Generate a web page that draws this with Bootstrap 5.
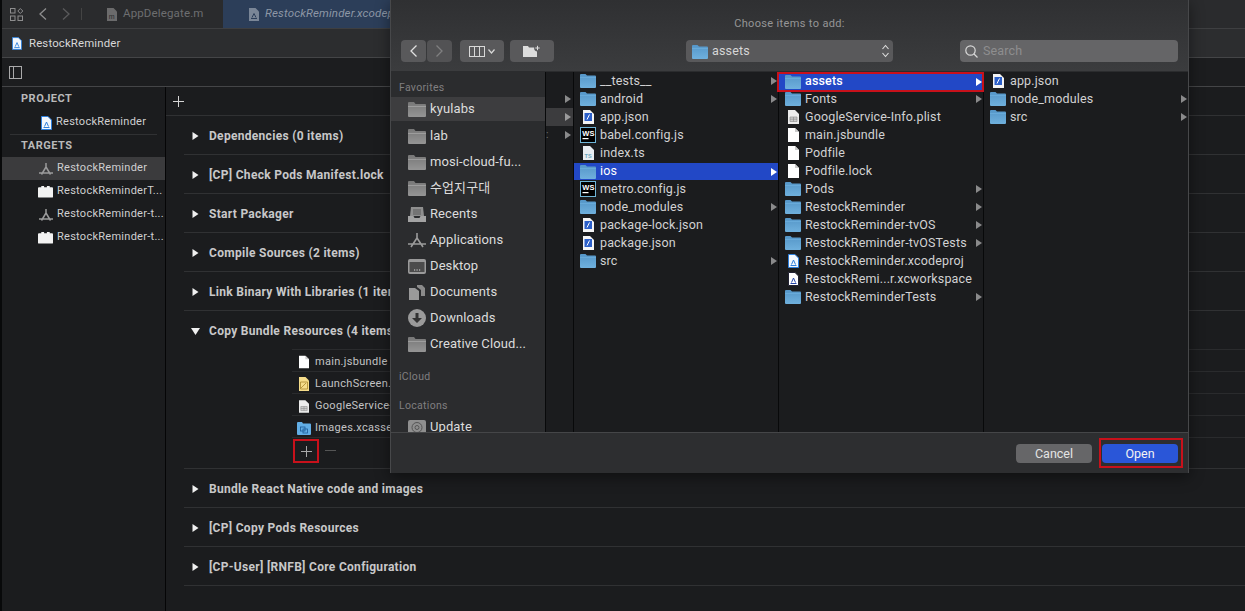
<!DOCTYPE html>
<html lang="en">
<head>
<meta charset="UTF-8">
<title>Xcode - Choose items to add</title>
<link href="https://cdn.jsdelivr.net/npm/bootstrap@5.3.3/dist/css/bootstrap.min.css" rel="stylesheet">
<style>
html, body { margin: 0; height: 100%; background: #1b1c1e; overflow: hidden; }
body { font-family: Roboto, "Noto Sans CJK KR", sans-serif; font-size: 12px; color: #d4d4d4; letter-spacing: .15px; }
svg { display: block; flex: none; }

/* xcode window behind the sheet */
.xc-app { position: relative; width: 1245px; height: 611px; border-left: 2px solid #08090a; overflow: hidden; }
.tab-bar { height: 29px; background: #2a2b2d; border-bottom: 1px solid #3e3f41; }
.tab-grid { margin: 0 16px 0 8px; }
.tab-fwd { margin-left: 15px; }
.tab-sep { width: 1px; height: 12px; background: #444; margin-left: 11px; }
.xc-tab { height: 28px; color: #6d6e70; font-size: 11.5px; }
.xc-tab svg { margin-right: 6px; }
.tab-one { width: 141px; padding-left: 25px; }
.tab-two { width: 170px; padding-left: 26px; background: #2c3e59; color: #8d97a6; font-style: italic; white-space: nowrap; overflow: hidden; }
.crumb-bar { height: 29px; background: #2c2d2f; border-bottom: 1px solid #444547; padding: 1px 0 0 10px; color: #d8d8d8; font-size: 11.4px; }
.crumb-bar svg { margin-right: 7px; }
.pane-bar { height: 29px; background: #1c1d1f; border-bottom: 1px solid #444547; padding-left: 7px; }
.xc-body { height: 524px; }
.xc-side { width: 164px; flex: none; border-right: 1px solid #050506; padding-top: 1px; }
.side-head { height: 22px; line-height: 22px; padding-left: 19px; font-weight: 700; font-size: 11px; color: #b9b9ba; letter-spacing: .5px; }
.side-row { height: 23px; padding-left: 36px; font-size: 11px; color: #cfcfd0; white-space: nowrap; overflow: hidden; letter-spacing: .27px; }
.side-row.is-on { background: #3b3b3d; }
.side-row svg { margin-right: 4px; }
.side-proj { padding: 2px 0 0 39px; }
.side-target { padding-left: 37px; }
.side-rule { height: 1px; background: #303133; margin: 1px 8px 0 8px; }
.xc-main { flex: 1; min-width: 0; }
.add-row { height: 29px; padding-left: 7px; border-bottom: 1px solid #303133; }
.phase { height: 39px; padding-top: 1px; margin-left: 18px; border-bottom: 1px solid #303133; font-weight: 700; font-size: 12px; color: #c8c8c9; white-space: nowrap; letter-spacing: .3px; }
.phase svg { margin: 0 10px 0 8px; }
.phase-open { height: 20px; padding-top: 0; border: 0; margin-top: 10px; }
.phase-open svg { margin: 0 9px 0 7px; }
.res-table { margin-left: 126px; margin-top: 8px; border-bottom: 1px solid #2a2b2d; }
.res-row { height: 22px; padding: 3px 0 0 3px; border-top: 1px solid #2a2b2d; font-size: 11px; color: #c4c4c5; white-space: nowrap; letter-spacing: .3px; }
.res-icon { width: 18px; display: flex; justify-content: center; margin-right: 2px; }
.res-tools { height: 31px; margin-left: 18px; border-bottom: 1px solid #303133; padding: 1px 0 0 109px; }
.red-box { border: 2px solid #c8111b; }
.plus-box { width: 26px; height: 24px; }
.minus-mark { width: 11px; height: 1px; background: #555; margin: 11px 0 0 6px; }

/* open panel sheet */
.sheet { position: absolute; left: 388px; top: 0; width: 799px; height: 473px; background: #2a2b2d; border: 1px solid #47484a; border-top: 0; box-shadow: 0 4px 14px rgba(0,0,0,.45); }
.sheet-top { height: 72px; background: linear-gradient(#2f3032, #3b3c3e); border-bottom: 1px solid #2b2c2e; }
.sheet-title { text-align: center; padding-top: 16px; height: 40px; color: #969697; font-size: 11px; letter-spacing: .35px; }
.sheet-tools { padding-left: 10px; height: 22px; }
.tool-btn { height: 22px; background: #59595b; border-radius: 4px; display: flex; align-items: center; justify-content: center; }
.back-btn { width: 25px; }
.fwd-btn { width: 25px; margin-left: 1px; background: #525254; }
.view-btn { width: 44px; margin-left: 8px; gap: 3px; }
.new-btn { width: 44px; margin-left: 6px; }
.path-btn { width: 207px; margin-left: 132px; justify-content: flex-start; padding: 1px 0 0 6px; color: #d6d6d6; font-size: 12.5px; position: relative; }
.path-btn svg:first-child { margin-right: 4px; }
.path-arrows { position: absolute; right: 4px; top: 4px; }
.search-box { width: 218px; margin-left: 67px; justify-content: flex-start; padding: 1px 0 0 5px; color: #8e8e8f; font-size: 12.5px; background: #656567; }
.search-box svg { margin-right: 5px; }
.sheet-mid { height: 360px; }
.fav-col { width: 155px; flex: none; background: #2b2c2e; border-right: 1px solid #08090a; padding: 8px 0 0 8px; overflow: hidden; }
.fav-title { height: 16px; line-height: 16px; color: #807f80; font-size: 10.5px; letter-spacing: .3px; }
.fav-row { height: 26px; margin-left: -8px; padding-left: 17px; color: #dcdcdc; font-size: 13px; letter-spacing: .1px; white-space: nowrap; }
.fav-row.is-on { background: #3d3d3f; height: 24px; margin-top: 1px; margin-bottom: 2px; }
.fav-row svg { margin-right: 4px; }
.fav-gap { margin-top: 12px; }
.fav-gap2 { margin-top: 13px; }
.file-col { background: #1b1c1e; border-right: 1px solid #08090a; flex: none; width: 205px; overflow: hidden; }
.col-stub { width: 28px; position: relative; }
.col-last { width: auto; flex: 1; border-right: 0; }
.file-row { height: 18px; padding: 0 1px 0 6px; color: #d2d2d3; font-size: 12.5px; white-space: nowrap; }
.file-row.is-on { background: #2248c6; color: #fff; height: 17px; margin-top: 1px; }
.file-name { margin-left: 4px; flex: 1; min-width: 0; }
.file-icon { width: 16px; display: flex; justify-content: center; }
.stub-row { height: 18px; justify-content: flex-end; padding-right: 2px; }
.stub-row.is-on { background: #3c3c3e; }
.stub-dots { position: absolute; left: 0; top: 58px; color: #777; font-size: 10px; line-height: 10px; }
.sheet-foot { height: 41px; background: #2d2e30; border-top: 1px solid #454648; }
.sheet-btn { height: 19px; padding: 0; font-size: 12.5px; line-height: 19px; border: 0; border-radius: 4px; color: #e4e4e4; }
.cancel-btn { width: 76px; background: #666668; }
.open-btn { width: 76px; background: #2a56d8; color: #f3f3f3; }
/* red callouts lie over the panel */
.mark-row { position: absolute; left: 386px; top: 72px; width: 207px; height: 20px; pointer-events: none; }
.mark-open { width: 84px; height: 30px; margin: 0 5px 0 7px; padding-right: 2px; display: flex; align-items: center; justify-content: center; }
</style>
</head>
<body>
<svg width="0" height="0" class="position-absolute">
<defs>
<linearGradient id="blueFill" x1="0" y1="0" x2="0" y2="1"><stop offset="0" stop-color="#5596c8"/><stop offset="1" stop-color="#6fb0dd"/></linearGradient>
<linearGradient id="grayFill" x1="0" y1="0" x2="0" y2="1"><stop offset="0" stop-color="#777"/><stop offset="1" stop-color="#959595"/></linearGradient>
<symbol id="i-folder" viewBox="0 0 16 14"><path d="M0 1q0-1 1-1h4.500l1.500 1.600H15q1 0 1 1V13q0 1-1 1H1q-1 0-1-1z" fill="url(#blueFill)"/><path d="M0 3h16v.7H0z" fill="#7cbce8" opacity=".6"/></symbol>
<symbol id="i-gfolder" viewBox="0 0 18 15"><path d="M0 1q0-1 1-1h5l1.500 2H17q1 0 1 1v11q0 1-1 1H1q-1 0-1-1z" fill="url(#grayFill)"/><path d="M0 4h18v.7H0z" fill="#aaa"/></symbol>
<symbol id="i-doc" viewBox="0 0 11 14"><path d="M0 0h7l4 4v10H0z" fill="#fff"/><path d="M7 0l4 4H7z" fill="#ccc"/></symbol>
<symbol id="i-json" viewBox="0 0 11 14"><path d="M0 0h7l4 4v10H0z" fill="#f4f4f4"/><rect x="1.500" y="3" width="7.500" height="8" fill="#2c5fc8"/><path d="M4 9.500l2.500-5" stroke="#fff" stroke-width="1"/></symbol>
<symbol id="i-ws" viewBox="0 0 16 16"><rect x=".5" y=".5" width="15" height="15" fill="#000" stroke="#6fb6d8"/><text x="2.200" y="8.500" font-family="Liberation Sans, sans-serif" font-size="7.500" font-weight="700" fill="#fff">WS</text><rect x="2.500" y="11" width="6" height="1.200" fill="#fff"/></symbol>
<symbol id="i-ts" viewBox="0 0 11 14"><path d="M0 0h7l4 4v10H0z" fill="#e9eef2"/><text x="1.500" y="11.500" font-family="Liberation Sans, sans-serif" font-size="5.500" font-weight="700" fill="#6ea7bd">TS</text></symbol>
<symbol id="i-plist" viewBox="0 0 11 14"><path d="M0 0h7l4 4v10H0z" fill="#ececec"/><path d="M2 7h7v4.500H2zM2 9.200h7M5.500 7v4.500" fill="#ccc" stroke="#888" stroke-width=".6"/></symbol>
<symbol id="i-proj" viewBox="0 0 11 14"><path d="M.5.500h6.500l3.500 3.500v9.500H.5z" fill="#f2f7fd" stroke="#2d7fdc"/><path d="M2.500 11.500h6M3.500 10.500l2-4.500 2 4.500" fill="none" stroke="#2d7fdc"/></symbol>
<symbol id="i-space" viewBox="0 0 11 14"><path d="M.5.500h6.500l3.500 3.500v9.500H.5z" fill="#fff" stroke="#223"/><path d="M2.500 11.500h6M3.500 10.500l2-4.500 2 4.500" fill="none" stroke="#2546a8"/></symbol>
<symbol id="i-target" viewBox="0 0 14 14"><path d="M7 1v4M7 5L2.500 12.500M7 5l4.500 7.500M0 11h14" fill="none" stroke="#9a9a9b" stroke-width="1.500"/></symbol>
<symbol id="i-block" viewBox="0 0 16 13"><path d="M1 2h2.500V.5h3V2h3V.5h3V2H15q1 0 1 1v9q0 1-1 1H1q-1 0-1-1V3q0-1 1-1z" fill="#f2f2f2"/></symbol>
<symbol id="i-story" viewBox="0 0 10 14"><path d="M0 0h6.500L10 3.500V14H0z" fill="#f5dc8a"/><path d="M1.500 5h7v7h-7zM2 11l5-5" fill="none" stroke="#a8862d" stroke-width=".8"/></symbol>
<symbol id="i-assets" viewBox="0 0 14 13"><path d="M0 1q0-1 1-1h4l1 1.500h7q1 0 1 1V12q0 1-1 1H1q-1 0-1-1z" fill="#62aee6"/><rect x="3.500" y="5" width="4.500" height="4" fill="none" stroke="#1d5a96" stroke-width=".8"/><rect x="6" y="7" width="4.500" height="4" fill="none" stroke="#1d5a96" stroke-width=".8"/></symbol>
<symbol id="i-arrow" viewBox="0 0 6 8"><path d="M0 0l6 4-6 4z"/></symbol>
</defs>
</svg>

<div class="xc-app">
  <!-- tab bar -->
  <div class="tab-bar d-flex align-items-start">
    <div class="d-flex align-items-center" style="height:28px">
      <svg class="tab-grid" width="13" height="13" viewBox="0 0 13 13" fill="none" stroke="#8d8d8e"><rect x=".5" y=".5" width="4.500" height="4.500"/><path d="M10.300.5l2.500 2.500-2.500 2.500L7.800 3z"/><rect x=".5" y="8" width="4.500" height="4.500"/><rect x="8" y="8" width="4.500" height="4.500"/></svg>
      <svg width="8" height="12" viewBox="0 0 8 12" fill="none" stroke="#8e8e8f" stroke-width="1.300"><path d="M7 .5L1 6l6 5.500"/></svg>
      <svg class="tab-fwd" width="8" height="12" viewBox="0 0 8 12" fill="none" stroke="#5a5a5c" stroke-width="1.300"><path d="M1 .5L7 6l-6 5.500"/></svg>
      <div class="tab-sep"></div>
    </div>
    <div class="xc-tab tab-one d-flex align-items-center"><svg width="10" height="13" viewBox="0 0 10 13"><path d="M0 0h6.500L10 3.500V13H0z" fill="#6b6b6c"/><text x="1.700" y="11" font-family="Liberation Sans, sans-serif" font-size="7" fill="#2a2b2d">m</text></svg>AppDelegate.m</div>
    <div class="xc-tab tab-two d-flex align-items-center"><svg width="10" height="13" viewBox="0 0 10 13"><path d="M0 0h6.500L10 3.500V13H0z" fill="#7a8697"/><path d="M2 10.500h6M3 9.500l2-4 2 4" fill="none" stroke="#2c3e59"/></svg>RestockReminder.xcodeproj</div>
  </div>
  <!-- breadcrumb -->
  <div class="crumb-bar d-flex align-items-center"><svg width="10" height="13"><use href="#i-proj"/></svg>RestockReminder</div>
  <div class="pane-bar d-flex align-items-center"><svg width="13" height="13" viewBox="0 0 13 13" fill="none" stroke="#a9a9aa"><rect x=".5" y=".5" width="12" height="12"/><path d="M4.500.5v12"/></svg></div>

  <div class="xc-body d-flex">
    <div class="xc-side">
      <div class="side-head">PROJECT</div>
      <div class="side-row side-proj d-flex align-items-center"><svg width="11" height="14"><use href="#i-proj"/></svg>RestockReminder</div>
      <div class="side-rule"></div>
      <div class="side-head">TARGETS</div>
      <div class="side-row side-target is-on d-flex align-items-center"><svg width="14" height="14"><use href="#i-target"/></svg>RestockReminder</div>
      <div class="side-row d-flex align-items-center"><svg width="15" height="13"><use href="#i-block"/></svg>RestockReminderT...</div>
      <div class="side-row side-target d-flex align-items-center"><svg width="14" height="14"><use href="#i-target"/></svg>RestockReminder-t...</div>
      <div class="side-row d-flex align-items-center"><svg width="15" height="13"><use href="#i-block"/></svg>RestockReminder-t...</div>
    </div>
    <div class="xc-main">
      <div class="add-row d-flex align-items-center"><svg width="11" height="11" viewBox="0 0 11 11" stroke="#d5d5d5"><path d="M5.500 0v11M0 5.500h11"/></svg></div>
      <div class="phase d-flex align-items-center"><svg width="7" height="8" fill="#f0f0f0"><use href="#i-arrow"/></svg>Dependencies (0 items)</div>
      <div class="phase d-flex align-items-center"><svg width="7" height="8" fill="#f0f0f0"><use href="#i-arrow"/></svg>[CP] Check Pods Manifest.lock</div>
      <div class="phase d-flex align-items-center"><svg width="7" height="8" fill="#f0f0f0"><use href="#i-arrow"/></svg>Start Packager</div>
      <div class="phase d-flex align-items-center"><svg width="7" height="8" fill="#f0f0f0"><use href="#i-arrow"/></svg>Compile Sources (2 items)</div>
      <div class="phase d-flex align-items-center"><svg width="7" height="8" fill="#f0f0f0"><use href="#i-arrow"/></svg>Link Binary With Libraries (1 item)</div>
      <div class="phase phase-open d-flex align-items-center"><svg width="9" height="7" viewBox="0 0 9 7" fill="#f0f0f0"><path d="M0 0h9L4.500 7z"/></svg>Copy Bundle Resources (4 items)</div>
      <div class="res-table">
        <div class="res-row d-flex align-items-center"><span class="res-icon"><svg width="10" height="14"><use href="#i-doc"/></svg></span>main.jsbundle</div>
        <div class="res-row d-flex align-items-center"><span class="res-icon"><svg width="10" height="14"><use href="#i-story"/></svg></span>LaunchScreen.xib</div>
        <div class="res-row d-flex align-items-center"><span class="res-icon"><svg width="10" height="13"><use href="#i-plist"/></svg></span>GoogleService-Info.plist</div>
        <div class="res-row d-flex align-items-center"><span class="res-icon"><svg width="14" height="13"><use href="#i-assets"/></svg></span>Images.xcassets</div>
      </div>
      <div class="res-tools d-flex align-items-start">
        <div class="plus-box red-box d-flex align-items-center justify-content-center"><svg width="11" height="11" viewBox="0 0 11 11" stroke="#a8a8a9"><path d="M5.500 0v11M0 5.500h11"/></svg></div>
        <div class="minus-mark"></div>
      </div>
      <div class="phase d-flex align-items-center"><svg width="7" height="8" fill="#f0f0f0"><use href="#i-arrow"/></svg>Bundle React Native code and images</div>
      <div class="phase d-flex align-items-center"><svg width="7" height="8" fill="#f0f0f0"><use href="#i-arrow"/></svg>[CP] Copy Pods Resources</div>
      <div class="phase d-flex align-items-center"><svg width="7" height="8" fill="#f0f0f0"><use href="#i-arrow"/></svg>[CP-User] [RNFB] Core Configuration</div>
    </div>
  </div>

  <!-- open panel -->
  <div class="sheet">
    <div class="sheet-top">
      <div class="sheet-title">Choose items to add:</div>
      <div class="sheet-tools d-flex">
        <div class="tool-btn back-btn"><svg width="7" height="12" viewBox="0 0 7 12" fill="none" stroke="#e0e0e0" stroke-width="1.300"><path d="M6.500.5L1 6l5.500 5.500"/></svg></div>
        <div class="tool-btn fwd-btn"><svg width="7" height="12" viewBox="0 0 7 12" fill="none" stroke="#7f7f80" stroke-width="1.300"><path d="M.5.500L6 6 .5 11.500"/></svg></div>
        <div class="tool-btn view-btn"><svg width="16" height="11" viewBox="0 0 16 11" fill="none" stroke="#d8d8d8"><rect x=".5" y=".5" width="15" height="10"/><path d="M5.500.5v10M10.500.5v10"/></svg><svg width="7" height="5" viewBox="0 0 7 5" fill="none" stroke="#d8d8d8" stroke-width="1.200"><path d="M.5.500L3.500 4l3-3.500"/></svg></div>
        <div class="tool-btn new-btn"><svg width="18" height="12" viewBox="0 0 18 12"><path d="M0 1h5l1 1.500h8V12H0z" fill="#dcdcdc"/><circle cx="14.500" cy="3" r="3.400" fill="#59595b"/><path d="M14.500 .8v4.400M12.300 3h4.400" stroke="#dcdcdc"/></svg></div>
        <div class="tool-btn path-btn"><svg width="16" height="14"><use href="#i-folder"/></svg>assets<svg class="path-arrows" width="7" height="14" viewBox="0 0 7 14" fill="none" stroke="#e0e0e0" stroke-width="1.100"><path d="M.5 5L3.500 1.500l3 3.500M.5 9l3 3.500 3-3.500"/></svg></div>
        <div class="tool-btn search-box"><svg width="13" height="13" viewBox="0 0 13 13" fill="none" stroke="#d8d8d8" stroke-width="1.200"><circle cx="5.500" cy="5.500" r="4.700"/><path d="M9 9l3.500 3.500"/></svg>Search</div>
      </div>
    </div>

    <div class="sheet-mid d-flex">
      <div class="fav-col">
        <div class="fav-title">Favorites</div>
        <div class="fav-row is-on d-flex align-items-center"><svg width="18" height="15"><use href="#i-gfolder"/></svg>kyulabs</div>
        <div class="fav-row d-flex align-items-center"><svg width="18" height="15"><use href="#i-gfolder"/></svg>lab</div>
        <div class="fav-row d-flex align-items-center"><svg width="18" height="15"><use href="#i-gfolder"/></svg>mosi-cloud-fu...</div>
        <div class="fav-row d-flex align-items-center"><svg width="18" height="15"><use href="#i-gfolder"/></svg>수업지구대</div>
        <div class="fav-row d-flex align-items-center"><svg width="18" height="15" viewBox="0 0 18 15"><path d="M3 0h12l1 9H2z" fill="#8f8f8f"/><path d="M0 9h5.500l1 2h5l1-2H18v6H0z" fill="#a3a3a3"/><path d="M5 3h8M5 5h8M5 7h8" stroke="#444" stroke-width=".7"/></svg>Recents</div>
        <div class="fav-row d-flex align-items-center"><svg width="18" height="15" viewBox="0 0 18 15" fill="none" stroke="#9b9b9b" stroke-width="1.600"><path d="M9 0v5M9 5l-6 9M9 5l6 9M0 11h18"/></svg>Applications</div>
        <div class="fav-row d-flex align-items-center"><svg width="18" height="15" viewBox="0 0 18 15"><rect width="18" height="15" rx="2" fill="#9a9a9a"/><rect x="1.500" y="3" width="15" height="10" fill="#4c4c4c"/><path d="M6 11h1.200M8.500 11h1.200M11 11h1.200" stroke="#ddd"/></svg>Desktop</div>
        <div class="fav-row d-flex align-items-center"><svg width="18" height="15" viewBox="0 0 18 15"><path d="M1 3h6l4 3v9H1z" fill="#9a9a9a"/><path d="M9 0h5l3 3v8h-4V5L9 2z" fill="#8b8b8b"/></svg>Documents</div>
        <div class="fav-row d-flex align-items-center"><svg width="18" height="18" viewBox="0 0 18 18"><circle cx="9" cy="9" r="9" fill="#9a9a9a"/><path d="M7.500 4h3v5H14l-5 5-5-5h3.500z" fill="#333"/></svg>Downloads</div>
        <div class="fav-row d-flex align-items-center"><svg width="18" height="15"><use href="#i-gfolder"/></svg>Creative Cloud...</div>
        <div class="fav-title fav-gap">iCloud</div>
        <div class="fav-title fav-gap2">Locations</div>
        <div class="fav-row d-flex align-items-center"><svg width="18" height="15" viewBox="0 0 18 15"><rect width="18" height="15" rx="2" fill="#8f8f8f"/><circle cx="9" cy="7.500" r="5" fill="none" stroke="#555"/><circle cx="9" cy="7.500" r="2" fill="none" stroke="#555"/></svg>Update</div>
      </div>

      <div class="file-col col-stub">
        <div class="stub-row d-flex align-items-center"></div>
        <div class="stub-row d-flex align-items-center"><svg width="6" height="8" fill="#8a8a8b"><use href="#i-arrow"/></svg></div>
        <div class="stub-row is-on d-flex align-items-center"><svg width="6" height="8" fill="#9a9a9b"><use href="#i-arrow"/></svg></div>
        <div class="stub-row d-flex align-items-center"><svg width="6" height="8" fill="#8a8a8b"><use href="#i-arrow"/></svg></div>
        <div class="stub-dots">:</div>
      </div>

      <div class="file-col">
        <div class="file-row d-flex align-items-center"><span class="file-icon"><svg width="16" height="14"><use href="#i-folder"/></svg></span><span class="file-name">__tests__</span><svg width="6" height="8" fill="#8a8a8b"><use href="#i-arrow"/></svg></div>
        <div class="file-row d-flex align-items-center"><span class="file-icon"><svg width="16" height="14"><use href="#i-folder"/></svg></span><span class="file-name">android</span><svg width="6" height="8" fill="#8a8a8b"><use href="#i-arrow"/></svg></div>
        <div class="file-row d-flex align-items-center"><span class="file-icon"><svg width="11" height="14"><use href="#i-json"/></svg></span><span class="file-name">app.json</span></div>
        <div class="file-row d-flex align-items-center"><span class="file-icon"><svg width="16" height="16"><use href="#i-ws"/></svg></span><span class="file-name">babel.config.js</span></div>
        <div class="file-row d-flex align-items-center"><span class="file-icon"><svg width="11" height="14"><use href="#i-ts"/></svg></span><span class="file-name">index.ts</span></div>
        <div class="file-row is-on d-flex align-items-center"><span class="file-icon"><svg width="16" height="14"><use href="#i-folder"/></svg></span><span class="file-name">ios</span><svg width="6" height="8" fill="#fff"><use href="#i-arrow"/></svg></div>
        <div class="file-row d-flex align-items-center"><span class="file-icon"><svg width="16" height="16"><use href="#i-ws"/></svg></span><span class="file-name">metro.config.js</span></div>
        <div class="file-row d-flex align-items-center"><span class="file-icon"><svg width="16" height="14"><use href="#i-folder"/></svg></span><span class="file-name">node_modules</span><svg width="6" height="8" fill="#8a8a8b"><use href="#i-arrow"/></svg></div>
        <div class="file-row d-flex align-items-center"><span class="file-icon"><svg width="11" height="14"><use href="#i-json"/></svg></span><span class="file-name">package-lock.json</span></div>
        <div class="file-row d-flex align-items-center"><span class="file-icon"><svg width="11" height="14"><use href="#i-json"/></svg></span><span class="file-name">package.json</span></div>
        <div class="file-row d-flex align-items-center"><span class="file-icon"><svg width="16" height="14"><use href="#i-folder"/></svg></span><span class="file-name">src</span><svg width="6" height="8" fill="#8a8a8b"><use href="#i-arrow"/></svg></div>
      </div>

      <div class="file-col">
        <div class="file-row is-on d-flex align-items-center"><span class="file-icon"><svg width="16" height="14"><use href="#i-folder"/></svg></span><span class="file-name fw-medium">assets</span><svg width="6" height="8" fill="#fff"><use href="#i-arrow"/></svg></div>
        <div class="file-row d-flex align-items-center"><span class="file-icon"><svg width="16" height="14"><use href="#i-folder"/></svg></span><span class="file-name">Fonts</span><svg width="6" height="8" fill="#8a8a8b"><use href="#i-arrow"/></svg></div>
        <div class="file-row d-flex align-items-center"><span class="file-icon"><svg width="11" height="14"><use href="#i-plist"/></svg></span><span class="file-name">GoogleService-Info.plist</span></div>
        <div class="file-row d-flex align-items-center"><span class="file-icon"><svg width="11" height="14"><use href="#i-doc"/></svg></span><span class="file-name">main.jsbundle</span></div>
        <div class="file-row d-flex align-items-center"><span class="file-icon"><svg width="11" height="14"><use href="#i-doc"/></svg></span><span class="file-name">Podfile</span></div>
        <div class="file-row d-flex align-items-center"><span class="file-icon"><svg width="11" height="14"><use href="#i-doc"/></svg></span><span class="file-name">Podfile.lock</span></div>
        <div class="file-row d-flex align-items-center"><span class="file-icon"><svg width="16" height="14"><use href="#i-folder"/></svg></span><span class="file-name">Pods</span><svg width="6" height="8" fill="#8a8a8b"><use href="#i-arrow"/></svg></div>
        <div class="file-row d-flex align-items-center"><span class="file-icon"><svg width="16" height="14"><use href="#i-folder"/></svg></span><span class="file-name">RestockReminder</span><svg width="6" height="8" fill="#8a8a8b"><use href="#i-arrow"/></svg></div>
        <div class="file-row d-flex align-items-center"><span class="file-icon"><svg width="16" height="14"><use href="#i-folder"/></svg></span><span class="file-name">RestockReminder-tvOS</span><svg width="6" height="8" fill="#8a8a8b"><use href="#i-arrow"/></svg></div>
        <div class="file-row d-flex align-items-center"><span class="file-icon"><svg width="16" height="14"><use href="#i-folder"/></svg></span><span class="file-name">RestockReminder-tvOSTests</span><svg width="6" height="8" fill="#8a8a8b"><use href="#i-arrow"/></svg></div>
        <div class="file-row d-flex align-items-center"><span class="file-icon"><svg width="11" height="14"><use href="#i-proj"/></svg></span><span class="file-name">RestockReminder.xcodeproj</span></div>
        <div class="file-row d-flex align-items-center"><span class="file-icon"><svg width="11" height="14"><use href="#i-space"/></svg></span><span class="file-name">RestockRemi...r.xcworkspace</span></div>
        <div class="file-row d-flex align-items-center"><span class="file-icon"><svg width="16" height="14"><use href="#i-folder"/></svg></span><span class="file-name">RestockReminderTests</span><svg width="6" height="8" fill="#8a8a8b"><use href="#i-arrow"/></svg></div>
      </div>

      <div class="file-col col-last">
        <div class="file-row d-flex align-items-center"><span class="file-icon"><svg width="11" height="14"><use href="#i-json"/></svg></span><span class="file-name">app.json</span></div>
        <div class="file-row d-flex align-items-center"><span class="file-icon"><svg width="16" height="14"><use href="#i-folder"/></svg></span><span class="file-name">node_modules</span><svg width="6" height="8" fill="#8a8a8b"><use href="#i-arrow"/></svg></div>
        <div class="file-row d-flex align-items-center"><span class="file-icon"><svg width="16" height="14"><use href="#i-folder"/></svg></span><span class="file-name">src</span><svg width="6" height="8" fill="#8a8a8b"><use href="#i-arrow"/></svg></div>
      </div>
    </div>

    <div class="sheet-foot d-flex align-items-center justify-content-end">
      <button class="btn sheet-btn cancel-btn" type="button">Cancel</button>
      <div class="mark-open red-box"><button class="btn sheet-btn open-btn" type="button">Open</button></div>
    </div>
    <div class="mark-row red-box"></div>
  </div>
</div>

<script src="https://cdn.jsdelivr.net/npm/bootstrap@5.3.3/dist/js/bootstrap.bundle.min.js"></script>
</body>
</html>
